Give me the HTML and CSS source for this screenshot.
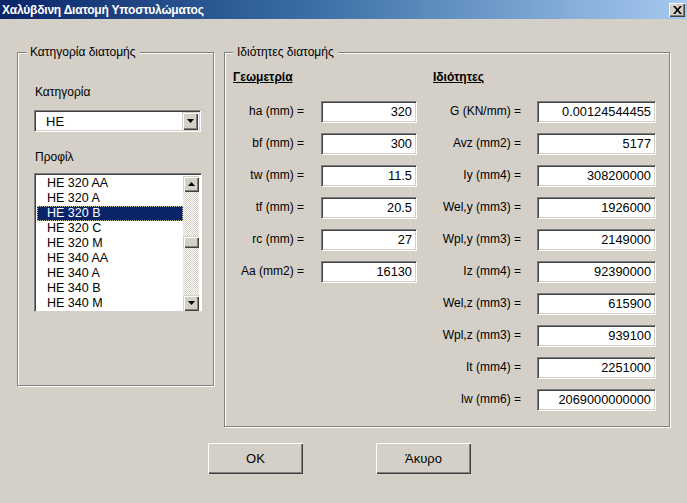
FILE: index.html
```html
<!DOCTYPE html>
<html lang="el">
<head>
<meta charset="utf-8">
<title>Χαλύβδινη Διατομή Υποστυλώματος</title>
<link rel="stylesheet" href="styles.css">
</head>
<body>
<div class="window">
  <div class="titlebar">
    <span class="title">Χαλύβδινη Διατομή Υποστυλώματος</span>
    <span class="close"><svg width="9" height="8" viewBox="0 0 9 8"><path d="M0 0h2.2l2.3 2.7L6.8 0H9L5.6 4 9 8H6.8L4.5 5.3 2.2 8H0l3.4-4z" fill="#000"/></svg></span>
  </div>
  <div class="client">
    <div class="groups">
      <div class="group group-left">
        <span class="legend">Κατηγορία διατομής</span>
        <div class="lbl">Κατηγορία</div>
        <div class="combo">
          <span class="combo-text">HE</span>
          <span class="sbtn combo-btn"><svg width="7" height="4" viewBox="0 0 7 4"><path d="M0 0h7L3.5 4z" fill="#000"/></svg></span>
        </div>
        <div class="lbl lbl-2">Προφίλ</div>
        <div class="listbox">
          <div class="items">
            <div class="item">HE 320 AA</div>
            <div class="item">HE 320 A</div>
            <div class="item selected">HE 320 B</div>
            <div class="item">HE 320 C</div>
            <div class="item">HE 320 M</div>
            <div class="item">HE 340 AA</div>
            <div class="item">HE 340 A</div>
            <div class="item">HE 340 B</div>
            <div class="item">HE 340 M</div>
          </div>
          <div class="vscroll">
            <span class="sbtn"><svg width="7" height="4" viewBox="0 0 7 4"><path d="M0 4h7L3.5 0z" fill="#000"/></svg></span>
            <div class="track"><span class="thumb"></span></div>
            <span class="sbtn"><svg width="7" height="4" viewBox="0 0 7 4"><path d="M0 0h7L3.5 4z" fill="#000"/></svg></span>
          </div>
        </div>
      </div>
      <div class="group group-right">
        <span class="legend">Ιδιότητες διατομής</span>
        <div class="cols">
          <div class="col col-geo">
            <div class="head">Γεωμετρία</div>
            <div class="row"><span class="rl">ha (mm) =</span><span class="field">320</span></div>
            <div class="row"><span class="rl">bf (mm) =</span><span class="field">300</span></div>
            <div class="row"><span class="rl">tw (mm) =</span><span class="field">11.5</span></div>
            <div class="row"><span class="rl">tf (mm) =</span><span class="field">20.5</span></div>
            <div class="row"><span class="rl">rc (mm) =</span><span class="field">27</span></div>
            <div class="row"><span class="rl">Aa (mm2) =</span><span class="field">16130</span></div>
          </div>
          <div class="col col-prop">
            <div class="head">Ιδιότητες</div>
            <div class="row"><span class="rl">G (KN/mm) =</span><span class="field">0.00124544455</span></div>
            <div class="row"><span class="rl">Avz (mm2) =</span><span class="field">5177</span></div>
            <div class="row"><span class="rl">Iy (mm4) =</span><span class="field">308200000</span></div>
            <div class="row"><span class="rl">Wel,y (mm3) =</span><span class="field">1926000</span></div>
            <div class="row"><span class="rl">Wpl,y (mm3) =</span><span class="field">2149000</span></div>
            <div class="row"><span class="rl">Iz (mm4) =</span><span class="field">92390000</span></div>
            <div class="row"><span class="rl">Wel,z (mm3) =</span><span class="field">615900</span></div>
            <div class="row"><span class="rl">Wpl,z (mm3) =</span><span class="field">939100</span></div>
            <div class="row"><span class="rl">It (mm4) =</span><span class="field">2251000</span></div>
            <div class="row"><span class="rl">Iw (mm6) =</span><span class="field">2069000000000</span></div>
          </div>
        </div>
      </div>
    </div>
    <div class="buttons">
      <button class="btn">OK</button>
      <button class="btn">Άκυρο</button>
    </div>
  </div>
</div>
</body>
</html>
```

FILE: styles.css
```css
* { box-sizing: border-box; }
html, body { margin: 0; padding: 0; }
body {
  width: 687px;
  height: 503px;
  overflow: hidden;
  background: #d4d0c8;
  font-family: "Liberation Sans", Arial, sans-serif;
  font-size: 12px;
  color: #000;
}
.window { width: 687px; height: 503px; display: flex; flex-direction: column; }

.titlebar {
  height: 19px;
  flex: none;
  display: flex;
  align-items: center;
  justify-content: space-between;
  padding: 0 2px 0 2px;
  background: linear-gradient(to right, #0a246a 0%, #3a6ea5 45%, #a6caf0 100%);
}
.title {
  color: #fff;
  font-weight: bold;
  font-size: 12px;
  letter-spacing: -0.2px;
}
.close {
  width: 16px;
  height: 14px;
  display: flex;
  align-items: center;
  justify-content: center;
  background: #d4d0c8;
  box-shadow: inset 1px 1px #fff, inset -1px -1px #404040, inset -2px -2px #808080;
}

.client { flex: 1; padding: 33px 0 0 17px; display: flex; flex-direction: column; }
.groups { display: flex; gap: 10px; align-items: flex-start; }

.group {
  position: relative;
  border: 1px solid #808080;
  box-shadow: inset 1px 1px #fff, 1px 1px #fff;
}
.legend {
  position: absolute;
  top: -8px;
  left: 8px;
  padding: 0 4px;
  background: #d4d0c8;
  line-height: 14px;
}
.group-left { width: 197px; height: 334px; padding: 32px 0 0 16px; }
.group-right { width: 446px; height: 375px; padding: 17px 0 0 7px; }

.lbl { line-height: 14px; padding-left: 1px; }
.lbl-2 { margin-top: 18px; }

.combo {
  margin-top: 11px;
  width: 167px;
  height: 22px;
  background: #fff;
  border-top: 1px solid #808080;
  border-left: 1px solid #808080;
  border-right: 1px solid #fff;
  border-bottom: 1px solid #fff;
  box-shadow: inset 1px 1px #404040, inset -1px -1px #d4d0c8;
  display: flex;
  align-items: center;
  justify-content: space-between;
  padding: 0 2px 0 11px;
  font-size: 13px;
}
.sbtn {
  width: 16px;
  height: 16px;
  flex: none;
  display: flex;
  align-items: center;
  justify-content: center;
  background: #d4d0c8;
  box-shadow: inset 1px 1px #d4d0c8, inset 2px 2px #fff, inset -1px -1px #404040, inset -2px -2px #808080;
}
.combo-btn { height: 18px; }

.listbox {
  margin-top: 9px;
  width: 168px;
  height: 139px;
  background: #fff;
  border-top: 1px solid #808080;
  border-left: 1px solid #808080;
  border-right: 1px solid #fff;
  border-bottom: 1px solid #d4d0c8;
  box-shadow: inset 1px 1px #404040;
  padding: 2px 2px 0 2px;
  display: flex;
}
.items { flex: 1; }
.item {
  height: 15px;
  line-height: 15px;
  padding-left: 10px;
  font-size: 12.5px;
}
.item.selected {
  background: #0a246a;
  color: #fff;
  outline: 1px dotted #c8c088;
  outline-offset: -1px;
}
.vscroll {
  width: 16px;
  height: 135px;
  display: flex;
  flex-direction: column;
}
.track {
  flex: 1;
  background: repeating-conic-gradient(#d4d0c8 0 25%, #fff 0 50%) 0 0 / 2px 2px;
  padding-top: 44px;
}
.thumb {
  display: block;
  width: 16px;
  height: 12px;
  background: #d4d0c8;
  box-shadow: inset 1px 1px #d4d0c8, inset 2px 2px #fff, inset -1px -1px #404040, inset -2px -2px #808080;
}

.cols { display: flex; }
.col { display: flex; flex-direction: column; gap: 10px; }
.col-geo { width: 200px; }
.head {
  font-weight: bold;
  text-decoration: underline;
  line-height: 14px;
  margin-bottom: 7px;
  padding-left: 1px;
}
.row { display: flex; align-items: center; height: 22px; }
.rl { text-align: right; padding-bottom: 3px; }
.col-geo .rl { width: 72px; margin-right: 17px; }
.col-prop .rl { width: 89px; margin-right: 16px; }
.field {
  height: 22px;
  background: #fff;
  border-top: 1px solid #808080;
  border-left: 1px solid #808080;
  border-right: 1px solid #fff;
  border-bottom: 1px solid #fff;
  box-shadow: inset 1px 1px #404040, inset -1px -1px #d4d0c8;
  text-align: right;
  padding: 0 4px 0 4px;
  line-height: 20px;
  font-size: 12.8px;
}
.col-geo .field { width: 96px; }
.col-prop .field { width: 119px; }

.buttons { display: flex; gap: 73px; padding: 16px 0 0 191px; }
.btn {
  width: 95px;
  height: 31px;
  margin: 0;
  padding: 0;
  border: none;
  background: #d4d0c8;
  font-family: "Liberation Sans", Arial, sans-serif;
  font-size: 13px;
  color: #000;
  box-shadow: inset 1px 1px #fff, inset -1px -1px #404040, inset -2px -2px #808080;
}
```
